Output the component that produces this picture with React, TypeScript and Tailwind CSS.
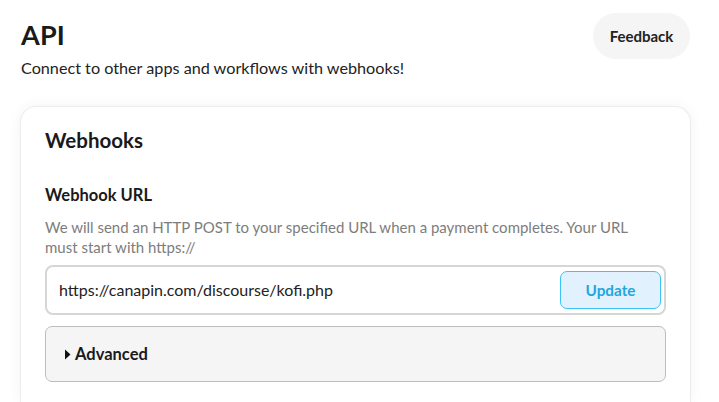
export default function App() {
  return (
    <div className="min-h-screen bg-white font-['Lato',sans-serif] text-[#1a1a1a]">
      <div className="px-[21px] pt-[13px]">
        <div className="flex items-start justify-between">
          <div>
            <h1 className="mt-[4px] text-[27px] font-bold leading-[36px] tracking-[0.2px]">API</h1>
            <p className="mt-[4px] text-[16.2px] leading-[22px] text-[#222]">
              Connect to other apps and workflows with webhooks!
            </p>
          </div>
          <button className="mr-[8px] h-[46px] w-[97px] rounded-full bg-[#f5f5f5] text-[15px] font-bold text-[#222]">
            Feedback
          </button>
        </div>

        <div className="mt-[27px] mr-[7px] -ml-px rounded-t-[16px] border border-b-0 border-[#ececec] bg-white px-[24px] pt-[19px] pb-[20px] shadow-[0_0_14px_rgba(0,0,0,0.05)]">
          <h2 className="text-[20.5px] font-bold leading-[28px]">Webhooks</h2>

          <h3 className="mt-[30px] text-[16.5px] font-bold leading-[22px]">Webhook URL</h3>
          <p className="mt-[11px] pr-[14px] text-[15px] leading-[20px] text-[#7d7d7d]">
            We will send an HTTP POST to your specified URL when a payment completes. Your URL must start with https://
          </p>

          <div className="mt-[8px] flex h-[50px] items-center justify-between rounded-[8px] border-2 border-[#d6d6d6] pl-[12px] pr-[3px]">
            <span className="text-[16px] text-[#222]">https://canapin.com/discourse/kofi.php</span>
            <button className="h-[38px] w-[101px] rounded-[7px] border border-[#3cc4f4] bg-[#e1f2fe] text-[15.3px] font-bold text-[#22a6e0]">
              Update
            </button>
          </div>

          <div className="mt-[11px] flex h-[56px] items-center rounded-[7px] border border-[#bdbdbd] bg-[#f5f5f5] pl-[18px]">
            <svg width="7" height="11" viewBox="0 0 7 11" className="mr-[4px]">
              <path d="M1 0.5 L6.5 5.5 L1 10.5 Z" fill="#111" />
            </svg>
            <span className="text-[16.5px] font-bold">Advanced</span>
          </div>
        </div>
      </div>
    </div>
  );
}
